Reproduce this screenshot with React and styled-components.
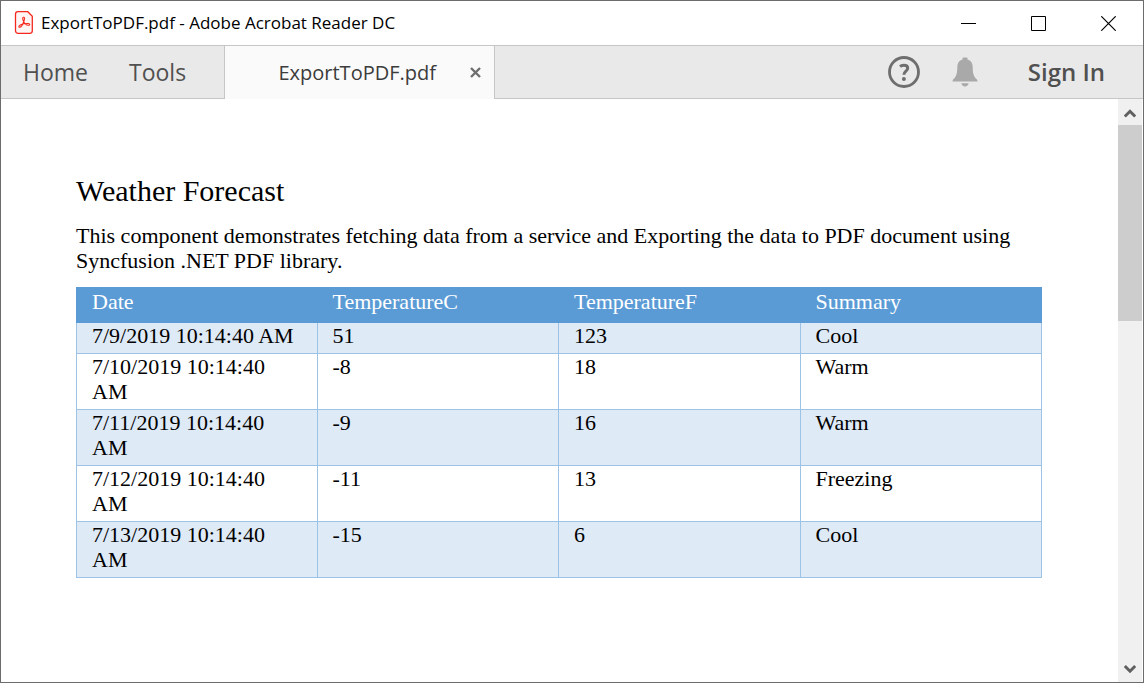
import React from 'react';
import styled, { createGlobalStyle } from 'styled-components';

const GlobalStyle = createGlobalStyle`
  * { box-sizing: border-box; }
  body { margin: 0; background: #fff; font-family: "Open Sans", "Noto Sans", sans-serif; }
  button { margin: 0; padding: 0; border: 0; background: none; font: inherit; color: inherit; }
  svg { display: block; flex: none; }
`;

const Window = styled.div`
  display: flex;
  flex-direction: column;
  min-height: 100vh;
  border: 1px solid #6d6b6d;
  background: #fff;
`;

const TitleBar = styled.header`
  display: flex;
  align-items: center;
  height: 45px;
  padding-left: 13px;
  border-bottom: 1px solid #c6c6c6;
`;

const WindowTitle = styled.h1`
  flex: 1;
  margin: 0 0 0 6px;
  font-size: 17px;
  line-height: 24px;
  font-weight: 400;
  color: #000;
  white-space: nowrap;
`;

const CaptionButton = styled.button`
  display: flex;
  align-items: center;
  justify-content: center;
  width: 70px;
  height: 44px;
`;

const Toolbar = styled.nav`
  display: flex;
  align-items: stretch;
  height: 53px;
  background: #e9e9e9;
  box-shadow: inset 0 -1px #c6c6c6;
`;

const MenuGroup = styled.div`
  display: flex;
  align-items: center;
  gap: 41px;
  width: 223px;
  padding: 0 0 2px 22px;
`;

const MenuButton = styled.button`
  font-size: ${(p) => (p.$strong ? 24 : 23)}px;
  line-height: 32px;
  font-weight: ${(p) => (p.$strong ? 600 : 400)};
  color: #505050;
  white-space: nowrap;
`;

const Tab = styled.div`
  display: flex;
  align-items: center;
  justify-content: flex-end;
  gap: 34px;
  width: 271px;
  padding-right: 13px;
  border: solid #c6c6c6;
  border-width: 0 1px;
  background: #fafafa;
`;

const TabLabel = styled.button`
  font-size: 20px;
  line-height: 32px;
  color: #3c3c3c;
`;

const Actions = styled.div`
  display: flex;
  flex: 1;
  align-items: center;
  justify-content: flex-end;
  padding: 0 38px 2px 0;
`;

const IconButton = styled.button`
  margin-right: ${(p) => p.$gap}px;
`;

const Viewer = styled.div`
  display: flex;
  flex: 1;
`;

const Page = styled.main`
  flex: 1;
  padding: 75px 76px 75px 75px;
  font-family: "Liberation Serif", serif;
  font-size: 22px;
  line-height: 25px;
  color: #000;
`;

const Heading = styled.h2`
  margin: 0 0 15px;
  font-size: 30px;
  line-height: 34px;
  font-weight: 400;
`;

const Intro = styled.p`
  margin: 0 0 14px;
`;

const ForecastTable = styled.table`
  width: 100%;
  table-layout: fixed;
  border-spacing: 0;
`;

const HeadCell = styled.th`
  padding: 2px 15px 9px;
  background: #5b9bd5;
  color: #fff;
  font-weight: 400;
  text-align: left;
  &:first-child { padding-left: 16px; }
`;

const Row = styled.tr`
  &:nth-child(odd) { background: #deeaf6; }
`;

const Cell = styled.td`
  padding: 0 15px 5px;
  border: solid #9cc2e5;
  border-width: 0 1px 1px 0;
  vertical-align: top;
  &:first-child { border-left-width: 1px; }
`;

const Scrollbar = styled.div`
  display: flex;
  flex-direction: column;
  width: 24px;
  margin-right: 1px;
  background: #f0f0f0;
`;

const ScrollButton = styled.button`
  display: flex;
  align-items: center;
  justify-content: center;
  height: 26px;
`;

const Track = styled.div`
  flex: 1;
`;

const Thumb = styled.div`
  height: 196px;
  background: #cdcdcd;
`;

const PdfIcon = () => (
  <svg width="21" height="26" viewBox="0 0 21 26" fill="none" stroke="#f5281e" aria-hidden="true">
    <path fill="#fff5f4" strokeWidth="1.3" d="M4 1.7h9.800l4.500 4.500v14.600a2.500 2.500 0 0 1-2.500 2.500H4a2.500 2.500 0 0 1-2.500-2.500V4.200A2.500 2.500 0 0 1 4 1.700z" />
    <path strokeWidth="1.1" strokeLinejoin="round" d="M9.300 7.200c1.500-.2 1.500 1.400.7 3.800-1 3-2.700 6.200-4.300 6.300-1.300 0-1.100-1.500 1-2.500 2.200-1 5.300-1.500 7.600-1.300 1.900.2 1.900 1.900.2 1.800-2-.1-4.400-2.200-5.300-4.700-.6-1.700-.7-3.200.1-3.400z" />
  </svg>
);

const HelpIcon = () => (
  <svg width="32" height="32" viewBox="0 0 32 32" fill="none" aria-hidden="true">
    <circle cx="16" cy="16" r="14.500" stroke="#6e6e6e" strokeWidth="2.800" />
    <path d="M12 10.500c1-.8 2.300-1.200 3.800-1.200 2.500 0 3.900 1.100 3.900 2.900 0 2.900-3.800 3-3.800 6.600" stroke="#6e6e6e" strokeWidth="3" />
    <circle cx="15.900" cy="22.900" r="2" fill="#6e6e6e" />
  </svg>
);

const BellIcon = () => (
  <svg width="26" height="30" viewBox="0 0 26 30" fill="#a9a9a9" aria-hidden="true">
    <path d="M10.500 2.500V1.500Q10.500.5 11.500.5h3q1 0 1 1v1c3.600 1 5.200 3.800 5.200 7.500 0 6 .8 9.500 4 12.300q.8.700.8 2.200h-25q0-1.500.8-2.200c3.200-2.800 4-6.300 4-12.300 0-3.700 1.600-6.500 5.200-7.500z" />
    <path d="M9.300 26.300h7.400c-.4 2-1.800 3.200-3.700 3.200s-3.300-1.200-3.700-3.200z" />
  </svg>
);

const Chevron = ({ down }) => (
  <svg width="12" height="12" viewBox="0 0 12 12" fill="none" stroke="#606060" strokeWidth="3" aria-hidden="true">
    <path d={down ? 'M.8 3 6 8.200 11.200 3' : 'M.8 10.500 6 5.300 11.200 10.500'} />
  </svg>
);

const columns = ['Date', 'TemperatureC', 'TemperatureF', 'Summary'];

const forecasts = [
  ['7/9/2019 10:14:40 AM', '51', '123', 'Cool'],
  ['7/10/2019 10:14:40 AM', '-8', '18', 'Warm'],
  ['7/11/2019 10:14:40 AM', '-9', '16', 'Warm'],
  ['7/12/2019 10:14:40 AM', '-11', '13', 'Freezing'],
  ['7/13/2019 10:14:40 AM', '-15', '6', 'Cool'],
];

export default function App() {
  return (
    <Window>
      <GlobalStyle />
      <TitleBar>
        <PdfIcon />
        <WindowTitle>ExportToPDF.pdf - Adobe Acrobat Reader DC</WindowTitle>
        <CaptionButton aria-label="Minimize">
          <svg width="15" height="15" stroke="#000"><path d="M0 7.500h15" /></svg>
        </CaptionButton>
        <CaptionButton aria-label="Maximize">
          <svg width="15" height="15" fill="none" stroke="#000"><path d="M.5.5h14v14H.5z" /></svg>
        </CaptionButton>
        <CaptionButton aria-label="Close">
          <svg width="15" height="15" stroke="#000" strokeWidth="1.200"><path d="M.3.300l14.400 14.400M14.700.300.300 14.700" /></svg>
        </CaptionButton>
      </TitleBar>
      <Toolbar>
        <MenuGroup>
          <MenuButton>Home</MenuButton>
          <MenuButton>Tools</MenuButton>
        </MenuGroup>
        <Tab>
          <TabLabel>ExportToPDF.pdf</TabLabel>
          <button aria-label="Close tab">
            <svg width="11" height="11" stroke="#6e6e6e" strokeWidth="2.400"><path d="M1 1l9 9M10 1l-9 9" /></svg>
          </button>
        </Tab>
        <Actions>
          <IconButton $gap={32} aria-label="Help"><HelpIcon /></IconButton>
          <IconButton $gap={50} aria-label="Notifications"><BellIcon /></IconButton>
          <MenuButton $strong>Sign In</MenuButton>
        </Actions>
      </Toolbar>
      <Viewer>
        <Page>
          <Heading>Weather Forecast</Heading>
          <Intro>
            This component demonstrates fetching data from a service and Exporting the data to PDF
            document using Syncfusion .NET PDF library.
          </Intro>
          <ForecastTable>
            <thead>
              <tr>{columns.map((name) => <HeadCell key={name} scope="col">{name}</HeadCell>)}</tr>
            </thead>
            <tbody>
              {forecasts.map((row) => (
                <Row key={row[0]}>
                  {row.map((value, i) => <Cell key={columns[i]}>{value}</Cell>)}
                </Row>
              ))}
            </tbody>
          </ForecastTable>
        </Page>
        <Scrollbar>
          <ScrollButton aria-label="Scroll up"><Chevron /></ScrollButton>
          <Track><Thumb /></Track>
          <ScrollButton aria-label="Scroll down"><Chevron down /></ScrollButton>
        </Scrollbar>
      </Viewer>
    </Window>
  );
}
